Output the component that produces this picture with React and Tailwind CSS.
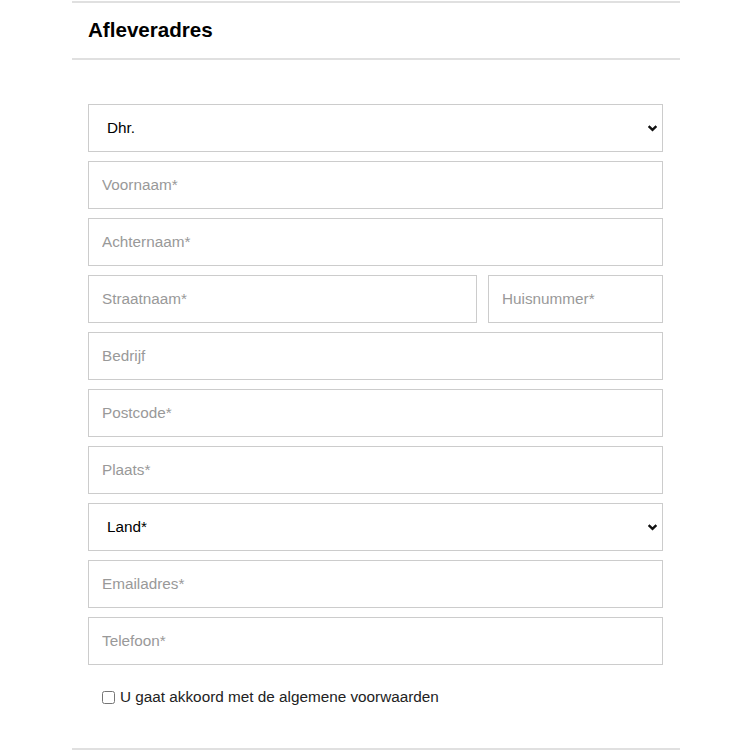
import React from 'react';

const inputCls =
	'h-12 w-full border border-[#cccccc] bg-white px-[13px] text-[15.3px] text-[#333] placeholder:text-[#999] outline-none';

function Chevron() {
	return (
		<svg
			className="pointer-events-none absolute right-[5px] top-1/2 h-[11px] w-[11px] -translate-y-1/2"
			viewBox="0 0 10 10"
			fill="none"
		>
			<path d="M1.5 3.2 L5 6.7 L8.5 3.2" stroke="#111" strokeWidth="2.2" />
		</svg>
	);
}

function Select({ value }) {
	return (
		<div className="relative">
			<select
				defaultValue={value}
				className="h-12 w-full appearance-none border border-[#cccccc] bg-white pl-[18px] text-[15.3px] text-black outline-none"
			>
				<option>{value}</option>
			</select>
			<Chevron />
		</div>
	);
}

export default function App() {
	return (
		<div
			className="h-[750px] overflow-hidden bg-white pt-px"
			style={{ fontFamily: '"Liberation Sans", Arial, sans-serif' }}
		>
			<div className="ml-[72px] w-[608px] border-t-2 border-b-2 border-[#e0e0e0]">
				<div className="flex h-[57px] items-center border-b-2 border-[#e0e0e0] px-4 pb-px">
					<h2 className="text-[20.6px] font-bold text-black">Afleveradres</h2>
				</div>
				<form className="flex flex-col gap-[9px] pl-4 pr-[17px] pt-[44px]">
					<Select value="Dhr." />
					<input className={inputCls} placeholder="Voornaam*" />
					<input className={inputCls} placeholder="Achternaam*" />
					<div className="flex gap-[11px]">
						<input className={inputCls + ' flex-1'} placeholder="Straatnaam*" />
						<input className={inputCls + ' !w-[175px] shrink-0'} placeholder="Huisnummer*" />
					</div>
					<input className={inputCls} placeholder="Bedrijf" />
					<input className={inputCls} placeholder="Postcode*" />
					<input className={inputCls} placeholder="Plaats*" />
					<Select value="Land*" />
					<input className={inputCls} placeholder="Emailadres*" />
					<input className={inputCls} placeholder="Telefoon*" />
					<label className="mt-[14px] mb-[42px] flex h-[18px] items-center pl-[14px] text-[15.3px] leading-[18px] text-[#222]">
						<input type="checkbox" className="mr-[5px] h-[13px] w-[13px]" />
						U gaat akkoord met de algemene voorwaarden
					</label>
				</form>
			</div>
		</div>
	);
}
